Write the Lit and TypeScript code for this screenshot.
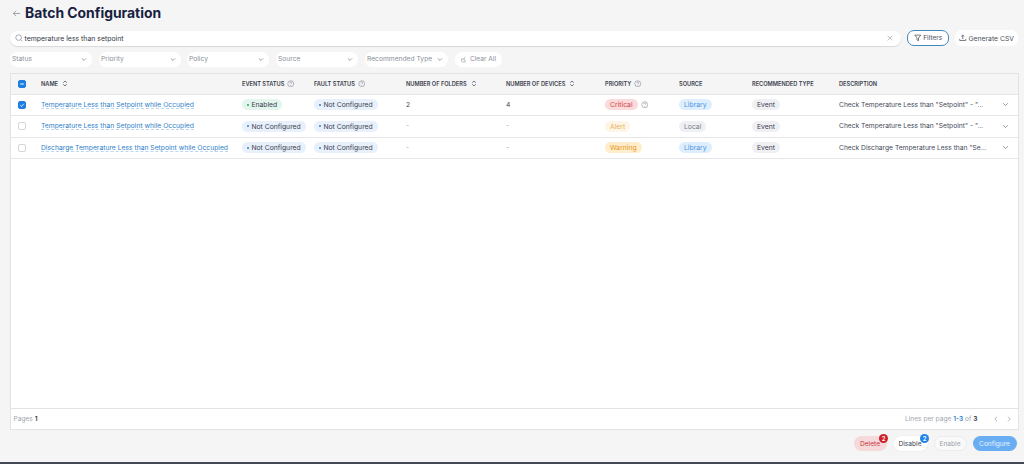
import { LitElement, html, css } from "lit";
import { customElement } from "lit/decorators.js";

const help = html`<svg class="help" viewBox="0 0 10 10"><circle cx="5" cy="5" r="4" fill="none" stroke="#777c88" stroke-width=".7"/><path d="M3.8 4a1.2 1.2 0 1 1 1.8 1c-.4.3-.6.5-.6.9" fill="none" stroke="#777c88" stroke-width=".7"/><circle cx="5" cy="7.1" r=".4" fill="#777c88"/></svg>`;
const sort = html`<svg class="sort" viewBox="0 0 8 10"><path d="M1.5 3.8 4 1.5l2.5 2.3M1.5 6.2 4 8.5l2.5-2.3" fill="none" stroke="#3a3f4c" stroke-width="1"/></svg>`;
const chev = html`<svg class="chev" viewBox="0 0 8 6"><path d="M1.2 1.5 4 4.3l2.8-2.8" fill="none" stroke="#6b7080" stroke-width=".9"/></svg>`;

const rows = [
  { checked: true, name: "Temperature Less than Setpoint while Occupied", event: "Enabled", folders: "2", devices: "4", priority: "Critical", pinfo: true, source: "Library", desc: 'Check Temperature Less than "Setpoint" - "...' },
  { checked: false, name: "Temperature Less than Setpoint while Occupied", event: "Not Configured", folders: "-", devices: "-", priority: "Alert", pinfo: false, source: "Local", desc: 'Check Temperature Less than "Setpoint" - "...' },
  { checked: false, name: "Discharge Temperature Less than Setpoint while Occupied", event: "Not Configured", folders: "-", devices: "-", priority: "Warning", pinfo: false, source: "Library", desc: 'Check Discharge Temperature Less than "Se...' },
];

@customElement("app-root")
export class AppRoot extends LitElement {
  static styles = css`
    :host { display: block; width: 1024px; height: 464px; background: #f5f5f6; font-family: Inter, "Liberation Sans", sans-serif; color: #2b3040; overflow: hidden; box-sizing: border-box; border-bottom: 2px solid #434a55; }
    * { box-sizing: border-box; }
    .page { display: flex; flex-direction: column; height: 462px; padding: 0 5.5px 0 9.5px; }
    .title { display: flex; align-items: center; gap: 4px; height: 26px; padding-left: 2.5px; }
    .title svg { width: 9px; height: 9px; }
    h1 { margin: 0; font-size: 13.9px; font-weight: 700; color: #16213e; }
    .search-row { display: flex; align-items: center; margin-top: 4px; height: 16px; gap: 6px; }
    .search { flex: none; width: 891.5px; height: 15px; background: #fff; border-radius: 8px; display: flex; align-items: center; padding: 0 7px 0 5px; gap: 2px; box-shadow: 0 1px 1px rgba(0,0,0,.12); font-size: 6.9px; color: #333845; }
    .search span { flex: 1; }
    .search svg { width: 8px; height: 8px; flex: none; }
    .btn { display: inline-flex; align-items: center; justify-content: center; gap: 2px; background: #fff; border-radius: 7px; height: 16px; font-size: 6.6px; color: #4a4f5c; flex: none; }
    .btn svg { width: 7.5px; height: 7.5px; }
    .filters { width: 42px; border: 1px solid #3f88b8; }
    .gen { width: 63px; font-size: 6.8px; }
    .filter-row { display: flex; align-items: center; margin-top: 5.5px; height: 15px; }
    .sel { height: 15px; background: #fff; border-radius: 7px; display: flex; align-items: center; justify-content: space-between; padding: 0 5px 0 2.5px; font-size: 6.7px; color: #8b8f9a; flex: none; }
    .sel .chev { width: 6px; height: 5px; }
    .s82 { width: 82px; }
    .s83 { width: 83px; }
    .ml6 { margin-left: 6px; }
    .ml7 { margin-left: 7px; }
    .clear { height: 15px; width: 47px; margin-left: 7px; background: #fff; border-radius: 7px; display: flex; align-items: center; justify-content: center; gap: 3px; font-size: 6.6px; color: #8b8f9a; flex: none; }
    .clear svg { width: 7px; height: 7px; }
    .card { flex: none; width: 1009px; height: 357px; margin-top: 6px; background: #fff; border: 1px solid #e3e3e6; display: flex; flex-direction: column; }
    .row { display: grid; grid-template-columns: 30.5px 201px 72px 92px 100px 99px 74px 73px 87px 163px 1fr; align-items: center; flex: none; border-bottom: 1px solid #e6e6e9; font-size: 6.7px; color: #444958; height: 21.5px; }
    .row.head { height: 21px; background: #f5f5f6; font-size: 5.65px; font-weight: 600; color: #3a3f4c; }
    .cell { display: flex; align-items: center; gap: 3px; white-space: nowrap; min-width: 0; }
    .help { width: 7.5px; height: 7.5px; flex: none; }
    .sort { width: 6px; height: 7px; flex: none; margin-left: 1px; }
    .chev { width: 7px; height: 5px; flex: none; }
    .box { width: 8px; height: 8px; margin-left: 7px; border-radius: 2px; border: 1px solid #d5d6da; background: #fff; display: block; }
    .box.on { background: #1f7fe0; border-color: #1f7fe0; display: flex; align-items: center; justify-content: center; }
    .box svg { width: 6px; height: 6px; }
    .link { color: #2f7fc9; border-bottom: 1px dashed #bcd6ee; line-height: 7px; font-size: 6.75px; }
    .pill { display: inline-flex; align-items: center; gap: 2px; height: 11px; border-radius: 6px; padding: 0 5px; font-size: 6.8px; }
    .dot { width: 2.4px; height: 2.4px; border-radius: 50%; background: currentColor; }
    .enabled { background: #e3f5ec; color: #3c4150; }
    .enabled .dot { color: #1fa566; }
    .nc { background: #e7f0fb; color: #3c4150; }
    .nc .dot { color: #2f7fc9; }
    .Critical { background: #fadada; color: #d2434b; }
    .Alert { background: #fff5e6; color: #e8b25e; }
    .Warning { background: #ffedcc; color: #e69a20; }
    .Library { background: #dfeefd; color: #4a95dd; }
    .Local { background: #eff0f3; color: #777c88; }
    .Event { background: #eff0f3; color: #3c4150; }
    .muted { color: #a0a4ad; }
    .spacer { flex: 1; }
    .foot { flex: none; height: 21px; border-top: 1px solid #e3e3e6; display: flex; align-items: center; justify-content: space-between; padding: 0 6px 0 3px; font-size: 6.6px; color: #a0a4ad; }
    .foot b { color: #2b3040; font-weight: 600; }
    .foot .blue { color: #2f7fc9; }
    .right { display: flex; align-items: center; }
    .arrows { display: flex; gap: 7px; margin-left: 15px; }
    .arrows svg { width: 6px; height: 6px; }
    .actions { flex: none; display: flex; justify-content: flex-end; align-items: center; gap: 6px; margin-top: 6.5px; padding-right: 2px; }
    .act { position: relative; height: 15px; border-radius: 8px; display: flex; align-items: center; justify-content: center; font-size: 6.6px; }
    .del { width: 33px; background: #f6d9da; color: #c8353d; }
    .dis { width: 35px; background: #fff; color: #3c4150; box-shadow: 0 0 1px rgba(0,0,0,.2); }
    .ena { width: 33px; background: #f9f9fa; color: #9a9ea8; border: 1px solid #ececef; }
    .cfg { width: 44px; background: #69aef2; color: #e8f3fe; }
    .badge { position: absolute; top: -2.5px; width: 9px; height: 9px; border-radius: 50%; font-size: 6px; font-weight: 600; color: #fff; display: flex; align-items: center; justify-content: center; }
    .del .badge { background: #cf1f28; right: -1.5px; }
    .dis .badge { background: #1f83ea; right: -1.5px; }
  `;

  render() {
    return html`<div class="page">
      <div class="title">
        <svg viewBox="0 0 10 10"><path d="M9 5H1.5M4.5 2 1.5 5l3 3" fill="none" stroke="#8b8f9a" stroke-width=".9"/></svg>
        <h1>Batch Configuration</h1>
      </div>
      <div class="search-row">
        <div class="search">
          <svg viewBox="0 0 10 10"><circle cx="4.5" cy="4.5" r="3.5" fill="none" stroke="#6b7080" stroke-width=".7"/><path d="m7 7 2.2 2.2" stroke="#6b7080" stroke-width=".7"/></svg>
          <span>temperature less than setpoint</span>
          <svg viewBox="0 0 10 10"><path d="m2 2 6 6M8 2 2 8" stroke="#9a9ea8" stroke-width=".8"/></svg>
        </div>
        <div class="btn filters"><svg viewBox="0 0 10 10"><path d="M1 1.5h8L6 5.3V9L4 8V5.3z" fill="none" stroke="#3c4150" stroke-width=".9"/></svg>Filters</div>
        <div class="btn gen"><svg viewBox="0 0 10 10"><path d="M5 7V1.5M3 3.3 5 1.5l2 1.8M1 6.5v2.2h8V6.5" fill="none" stroke="#3c4150" stroke-width=".9"/></svg>Generate CSV</div>
      </div>
      <div class="filter-row">
        <div class="sel s82">Status ${chev}</div>
        <div class="sel s82 ml7">Priority ${chev}</div>
        <div class="sel s82 ml6">Policy ${chev}</div>
        <div class="sel s82 ml7">Source ${chev}</div>
        <div class="sel s83 ml7">Recommended Type ${chev}</div>
        <div class="clear"><svg viewBox="0 0 10 10"><path d="M1.5 4.5h5l1 4H3zM5 4.5l2.5-3.5" fill="none" stroke="#8b8f9a" stroke-width=".8"/></svg>Clear All</div>
      </div>
      <div class="card">
        <div class="row head">
          <div class="cell"><span class="box on"><svg viewBox="0 0 10 10"><path d="M2 5h6" stroke="#fff" stroke-width="1.6"/></svg></span></div>
          <div class="cell">NAME ${sort}</div>
          <div class="cell">EVENT STATUS ${help}</div>
          <div class="cell">FAULT STATUS ${help}</div>
          <div class="cell">NUMBER OF FOLDERS ${sort}</div>
          <div class="cell">NUMBER OF DEVICES ${sort}</div>
          <div class="cell">PRIORITY ${help}</div>
          <div class="cell">SOURCE</div>
          <div class="cell">RECOMMENDED TYPE</div>
          <div class="cell">DESCRIPTION</div>
          <div></div>
        </div>
        ${rows.map((r) => html`<div class="row">
          <div class="cell">${r.checked
            ? html`<span class="box on"><svg viewBox="0 0 10 10"><path d="m2 5.2 2.2 2.2L8 3" fill="none" stroke="#fff" stroke-width="1.3"/></svg></span>`
            : html`<span class="box"></span>`}</div>
          <div class="cell"><span class="link">${r.name}</span></div>
          <div class="cell"><span class="pill ${r.event === "Enabled" ? "enabled" : "nc"}"><i class="dot"></i>${r.event}</span></div>
          <div class="cell"><span class="pill nc"><i class="dot"></i>Not Configured</span></div>
          <div class="cell ${r.folders === "-" ? "muted" : ""}">${r.folders}</div>
          <div class="cell ${r.devices === "-" ? "muted" : ""}">${r.devices}</div>
          <div class="cell"><span class="pill ${r.priority}">${r.priority}</span>${r.pinfo ? help : ""}</div>
          <div class="cell"><span class="pill ${r.source}">${r.source}</span></div>
          <div class="cell"><span class="pill Event">Event</span></div>
          <div class="cell">${r.desc}</div>
          <div class="cell">${chev}</div>
        </div>`)}
        <div class="spacer"></div>
        <div class="foot">
          <div>Pages <b>1</b></div>
          <div class="right">Lines per page&nbsp;<b class="blue">1-3</b>&nbsp;of&nbsp;<b>3</b>
            <div class="arrows">
              <svg viewBox="0 0 6 6"><path d="M4 .8 1.8 3 4 5.2" fill="none" stroke="#a0a4ad" stroke-width=".8"/></svg>
              <svg viewBox="0 0 6 6"><path d="M2 .8 4.2 3 2 5.2" fill="none" stroke="#a0a4ad" stroke-width=".8"/></svg>
            </div>
          </div>
        </div>
      </div>
      <div class="actions">
        <div class="act del">Delete<span class="badge">2</span></div>
        <div class="act dis">Disable<span class="badge">2</span></div>
        <div class="act ena">Enable</div>
        <div class="act cfg">Configure</div>
      </div>
    </div>`;
  }
}
